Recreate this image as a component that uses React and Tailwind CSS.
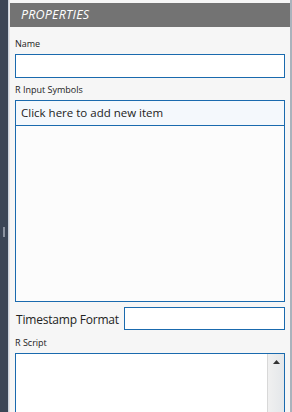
import React from "react";

export default function App() {
  return (
    <div className="w-[292px] h-[412px] flex overflow-hidden bg-[#f6f6f6]" style={{ fontFamily: '"Open Sans", "Noto Sans", sans-serif' }}>
      {/* left dark strip */}
      <div className="w-[8px] h-full bg-[#3b4656] flex flex-col items-center justify-center">
        <div className="w-[2px] h-[10px] bg-[#8a93a0] mt-[52px]" />
      </div>
      <div className="w-[1px] h-full bg-[#c9d3de]" />
      <div className="w-[1px] h-full bg-[#e6e6e6]" />
      {/* main panel */}
      <div className="flex-1 flex flex-col pt-[3px]">
        <div className="h-[24px] shrink-0 bg-[#737373] flex items-center pl-[11px]">
          <span className="text-white italic text-[12.5px] tracking-[0.2px]">PROPERTIES</span>
        </div>
        <div className="flex flex-col pl-[5px] pr-[5px]">
          <div className="text-[9px] text-[#222] mt-[11px] leading-[12px]">Name</div>
          <div className="mt-[4px] h-[24px] border-[1.5px] border-[#1a6aae] bg-white" />
          <div className="text-[9px] text-[#222] mt-[6px] leading-[12px]">R Input Symbols</div>
          <div className="mt-[4px] h-[202px] border-[1.5px] border-[#1a6aae] bg-[#fcfcfc] flex flex-col">
            <div className="h-[25px] bg-[#f4f8fc] border-b-[1.5px] border-[#1a6aae] flex items-center pl-[5px]">
              <span className="text-[11.5px] text-[#222]">Click here to add new item</span>
            </div>
          </div>
          <div className="mt-[4px] flex items-center h-[24px]">
            <span className="text-[12px] text-[#222] pl-[1px] w-[109px] shrink-0 mt-[4px] whitespace-nowrap tracking-[-0.2px]">Timestamp Format</span>
            <div className="flex-1 h-[23px] border-[1.5px] border-[#1a6aae] bg-white" />
          </div>
          <div className="text-[9px] text-[#222] mt-[7px] leading-[12px]">R Script</div>
          <div className="mt-[4px] h-[70px] border-[1.5px] border-[#1a6aae] bg-white flex justify-end">
            <div className="w-[17px] h-full bg-gradient-to-r from-[#f0f0f0] to-[#e4e7ea] border-l border-[#d8d8d8] flex justify-center pt-[6px]">
              <svg width="7" height="4" viewBox="0 0 7 4"><path d="M0 4 L3.5 0 L7 4 Z" fill="#333" /></svg>
            </div>
          </div>
        </div>
      </div>
      <div className="w-[2px] h-full bg-[#aab2bc]" />
    </div>
  );
}
